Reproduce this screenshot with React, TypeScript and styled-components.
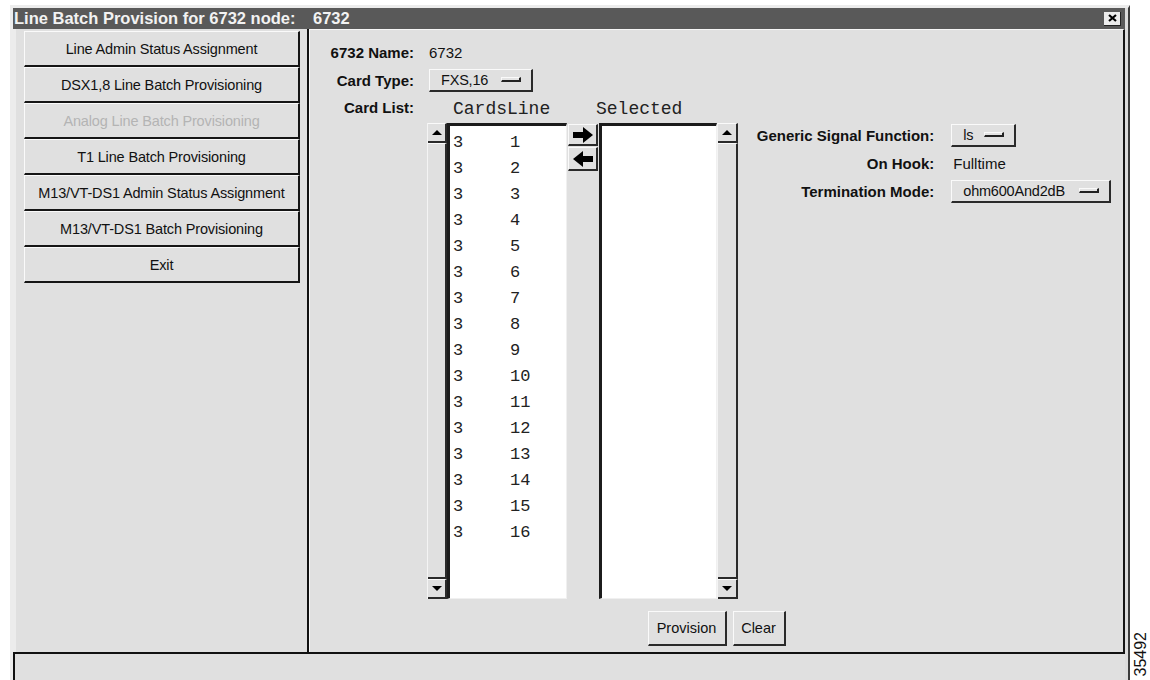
import React from "react";
import styled, { createGlobalStyle } from "styled-components";

const GlobalStyle = createGlobalStyle`
  html, body {
    margin: 0;
    padding: 0;
    background: #ffffff;
    font-family: "Liberation Sans", Arial, sans-serif;
    color: #111;
  }
`;

const menuItems = [
  { label: "Line Admin Status Assignment" },
  { label: "DSX1,8 Line Batch Provisioning" },
  { label: "Analog Line Batch Provisioning", disabled: true },
  { label: "T1 Line Batch Provisioning" },
  { label: "M13/VT-DS1 Admin Status Assignment" },
  { label: "M13/VT-DS1 Batch Provisioning" },
  { label: "Exit" },
];

const cardLines = Array.from({ length: 16 }, (_, i) => ({ card: 3, line: i + 1 }));

export default function App() {
  return (
    <>
      <GlobalStyle />
      <Page>
        <Window>
          <TitleBar>
            <TitleLabel>Line Batch Provision for 6732 node:</TitleLabel>
            <span>6732</span>
            <CloseButton aria-label="close">
              <svg width="9" height="8" viewBox="0 0 9 8">
                <path d="M1 1 L8 7 M8 1 L1 7" stroke="#000" strokeWidth="2.2" />
              </svg>
            </CloseButton>
          </TitleBar>

          <Body>
            <SideMenu>
              {menuItems.map((m) => (
                <MenuButton key={m.label} $disabled={m.disabled}>
                  {m.label}
                </MenuButton>
              ))}
            </SideMenu>

            <MainPanel>
              <Fields>
                <Label>6732 Name:</Label>
                <Value>6732</Value>

                <Label>Card Type:</Label>
                <Value>
                  <OptionMenu $width={104}>
                    FXS,16
                    <Indicator />
                  </OptionMenu>
                </Value>

                <Label $top>Card List:</Label>
                <ListArea>
                  <ColumnHead $col={2} $shift={6}>CardsLine</ColumnHead>
                  <ColumnHead $col={4} $shift={-3}>Selected</ColumnHead>

                  <ScrollBar $col={1}>
                    <ScrollArrow>
                      <Triangle $up />
                    </ScrollArrow>
                    <ScrollThumb />
                    <ScrollArrow>
                      <Triangle />
                    </ScrollArrow>
                  </ScrollBar>

                  <ListBox $col={2}>
                    {cardLines.map((r) => (
                      <ListRow key={r.line}>
                        <span>{r.card}</span>
                        <span>{r.line}</span>
                      </ListRow>
                    ))}
                  </ListBox>

                  <MoveButtons>
                    <MoveButton $h={22}>
                      <svg width="22" height="16" viewBox="0 0 22 16">
                        <polygon points="1,5 11,5 11,0 21,8 11,16 11,11 1,11" fill="#000" />
                      </svg>
                    </MoveButton>
                    <MoveButton $h={24}>
                      <svg width="22" height="16" viewBox="0 0 22 16">
                        <polygon points="21,5 11,5 11,0 1,8 11,16 11,11 21,11" fill="#000" />
                      </svg>
                    </MoveButton>
                  </MoveButtons>

                  <ListBox $col={4} />

                  <ScrollBar $col={5}>
                    <ScrollArrow>
                      <Triangle $up />
                    </ScrollArrow>
                    <ScrollThumb />
                    <ScrollArrow>
                      <Triangle />
                    </ScrollArrow>
                  </ScrollBar>

                  <SignalForm>
                    <Label>Generic Signal Function:</Label>
                    <div>
                      <OptionMenu $width={65}>
                        ls
                        <Indicator />
                      </OptionMenu>
                    </div>

                    <Label>On Hook:</Label>
                    <Value>Fulltime</Value>

                    <Label>Termination Mode:</Label>
                    <div>
                      <OptionMenu $width={160}>
                        ohm600And2dB
                        <Indicator />
                      </OptionMenu>
                    </div>
                  </SignalForm>
                </ListArea>
              </Fields>

              <ActionRow>
                <PushButton $width={79}>Provision</PushButton>
                <PushButton $width={53}>Clear</PushButton>
              </ActionRow>
            </MainPanel>
          </Body>

          <StatusBar />
        </Window>

        <Stamp>
          <StampText>35492</StampText>
        </Stamp>
      </Page>
    </>
  );
}

const Page = styled.div`
  display: flex;
  height: 680px;
  padding: 5px 0 0 10px;
  box-sizing: border-box;
  overflow: hidden;
`;

const Window = styled.div`
  width: 1120px;
  display: flex;
  flex-direction: column;
  background: #dcdcdc;
  border-top: 3px solid #ececec;
  border-left: 3px solid #ececec;
  border-right: 2px solid #3c3c3c;
  padding-right: 3px;
  box-sizing: border-box;
  flex-shrink: 0;
`;

const TitleBar = styled.div`
  height: 21px;
  display: flex;
  align-items: center;
  background: #595959;
  color: #f2f2f2;
  font-weight: bold;
  font-size: 16.5px;
  padding-left: 1px;
  box-sizing: border-box;
`;

const TitleLabel = styled.span`
  width: 299px;
  flex-shrink: 0;
  white-space: nowrap;
`;

const CloseButton = styled.div`
  margin-left: auto;
  margin-right: 4px;
  width: 17px;
  height: 14px;
  display: flex;
  align-items: center;
  justify-content: center;
  background: #ececec;
  border-right: 1px solid #222;
  border-bottom: 1px solid #222;
  box-sizing: border-box;
`;

const Body = styled.div`
  height: 623px;
  display: flex;
`;

const SideMenu = styled.div`
  width: 296px;
  display: flex;
  flex-direction: column;
  padding: 2px 0 0 8px;
  box-sizing: border-box;
  background: #e0e0e0;
  border-left: 3px solid #ececec;
  border-right: 2px solid #111;
`;

const MenuButton = styled.div<{ $disabled?: boolean }>`
  width: 276px;
  height: 36px;
  display: flex;
  align-items: center;
  justify-content: center;
  box-sizing: border-box;
  background: #e0e0e0;
  border-top: 1px solid #fafafa;
  border-left: 1px solid #fafafa;
  border-bottom: 2px solid #151515;
  border-right: 2px solid #151515;
  font-size: 14.5px;
  letter-spacing: -0.15px;
  color: ${(p) => (p.$disabled ? "#b4b4b4" : "#111")};
  white-space: nowrap;
`;

const MainPanel = styled.div`
  flex: 1;
  display: flex;
  flex-direction: column;
  background: #e0e0e0;
  border-left: 1px solid #f6f6f6;
  border-top: 1px solid #f6f6f6;
  border-right: 2px solid #151515;
  padding: 8px 0 6px 0;
  box-sizing: border-box;
`;

const Fields = styled.div`
  display: grid;
  grid-template-columns: 104px 1fr;
  grid-auto-rows: minmax(28px, auto);
  column-gap: 13px;
  align-items: center;
`;

const Label = styled.div<{ $top?: boolean }>`
  text-align: right;
  font-weight: bold;
  font-size: 15px;
  white-space: nowrap;
  align-self: ${(p) => (p.$top ? "start" : "center")};
  padding-top: ${(p) => (p.$top ? "5px" : "0")};
`;

const Value = styled.div`
  font-size: 15px;
  padding-left: 2px;
`;

const OptionMenu = styled.div<{ $width: number }>`
  width: ${(p) => p.$width}px;
  height: 23px;
  display: flex;
  align-items: center;
  justify-content: space-between;
  padding: 0 10px 0 11px;
  box-sizing: border-box;
  background: #e0e0e0;
  border-top: 1px solid #fafafa;
  border-left: 1px solid #fafafa;
  border-bottom: 2px solid #2a2a2a;
  border-right: 2px solid #2a2a2a;
  font-size: 14.5px;
  letter-spacing: -0.2px;
`;

const Indicator = styled.span`
  width: 20px;
  height: 5px;
  box-sizing: border-box;
  background: #e4e4e4;
  border-top: 1px solid #fafafa;
  border-left: 1px solid #fafafa;
  border-bottom: 2px solid #222;
  border-right: 2px solid #222;
`;

const ListArea = styled.div`
  display: grid;
  grid-template-columns: 20px 120px 32px 118px 21px auto;
  grid-template-rows: 29px 476px;
`;

const ColumnHead = styled.div<{ $col: number; $shift: number }>`
  grid-column: ${(p) => p.$col};
  grid-row: 1;
  align-self: center;
  margin-left: ${(p) => p.$shift}px;
  font-family: "Liberation Mono", "Courier New", monospace;
  font-size: 18px;
  color: #222;
  white-space: nowrap;
`;

const ScrollBar = styled.div<{ $col: number }>`
  grid-column: ${(p) => p.$col};
  grid-row: 2;
  display: flex;
  flex-direction: column;
  background: #d6d6d6;
  border-left: 1px solid #f4f4f4;
  box-sizing: border-box;
`;

const ScrollArrow = styled.div`
  height: 20px;
  display: flex;
  align-items: center;
  justify-content: center;
  background: #e0e0e0;
  border-top: 1px solid #fafafa;
  border-bottom: 2px solid #2a2a2a;
  border-right: 2px solid #2a2a2a;
  box-sizing: border-box;
`;

const Triangle = styled.span<{ $up?: boolean }>`
  width: 0;
  height: 0;
  border-left: 5px solid transparent;
  border-right: 5px solid transparent;
  ${(p) => (p.$up ? "border-bottom: 5px solid #000;" : "border-top: 5px solid #000;")}
`;

const ScrollThumb = styled.div`
  flex: 1;
  background: #e0e0e0;
  border-top: 1px solid #fafafa;
  border-bottom: 2px solid #2a2a2a;
  border-right: 2px solid #2a2a2a;
  box-sizing: border-box;
`;

const ListBox = styled.div<{ $col: number }>`
  grid-column: ${(p) => p.$col};
  grid-row: 2;
  background: #ffffff;
  border-top: 3px solid #1c1c1c;
  border-left: 3px solid #1c1c1c;
  border-bottom: 1px solid #f0f0f0;
  border-right: 1px solid #f0f0f0;
  padding: 3px 0 0 3px;
  box-sizing: border-box;
`;

const ListRow = styled.div`
  display: grid;
  grid-template-columns: 57px auto;
  height: 26px;
  align-items: center;
  font-family: "Liberation Mono", "Courier New", monospace;
  font-size: 17px;
  color: #222;
`;

const MoveButtons = styled.div`
  grid-column: 3;
  grid-row: 2;
  display: flex;
  flex-direction: column;
  gap: 1px;
  padding: 1px 1px 0 1px;
`;

const MoveButton = styled.div<{ $h: number }>`
  width: 30px;
  height: ${(p) => p.$h}px;
  display: flex;
  align-items: center;
  justify-content: center;
  background: #e0e0e0;
  border-top: 1px solid #fafafa;
  border-left: 1px solid #fafafa;
  border-bottom: 2px solid #2a2a2a;
  border-right: 2px solid #2a2a2a;
  box-sizing: border-box;
`;

const SignalForm = styled.div`
  grid-column: 6;
  grid-row: 2;
  align-self: start;
  display: grid;
  grid-template-columns: auto auto;
  grid-auto-rows: 28px;
  column-gap: 17px;
  align-items: center;
  padding-left: 7px;
  margin-top: -2px;
`;

const ActionRow = styled.div`
  margin-top: auto;
  display: flex;
  justify-content: center;
  gap: 6px;
`;

const PushButton = styled.div<{ $width: number }>`
  width: ${(p) => p.$width}px;
  height: 35px;
  display: flex;
  align-items: center;
  justify-content: center;
  background: #e0e0e0;
  border-top: 1px solid #fafafa;
  border-left: 1px solid #fafafa;
  border-bottom: 2px solid #2a2a2a;
  border-right: 2px solid #2a2a2a;
  box-sizing: border-box;
  font-size: 14.5px;
`;

const StatusBar = styled.div`
  flex: 1;
  background: #e0e0e0;
  border-top: 2px solid #111;
  border-left: 2px solid #111;
`;

const Stamp = styled.div`
  flex: 1;
  display: flex;
  align-items: flex-end;
  padding: 0 0 4px 3px;
`;

const StampText = styled.span`
  writing-mode: vertical-rl;
  transform: rotate(180deg);
  font-size: 16px;
  line-height: 16px;
`;
